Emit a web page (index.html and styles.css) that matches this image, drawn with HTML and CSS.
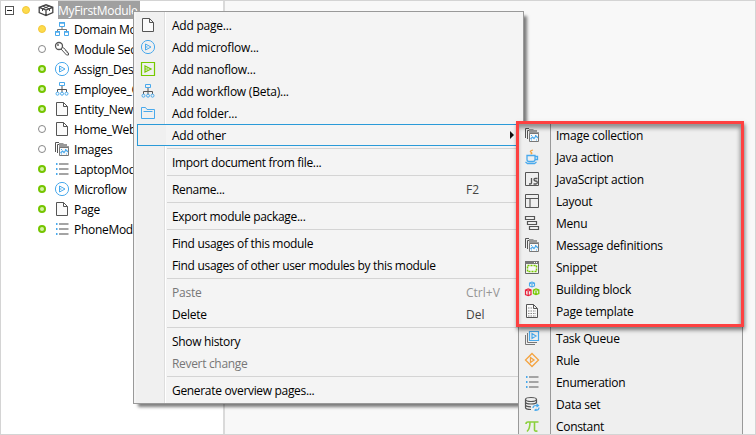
FILE: index.html
```html
<!DOCTYPE html>
<html lang="en"><head><meta charset="utf-8"><title>App Explorer</title><link rel="stylesheet" href="styles.css"></head>
<body>
<svg class="defs" width="0" height="0">
<symbol id="page" viewBox="0 0 16 16"><path d="M2.500 1.500h7l4 4v9h-11zM9.500 1.500v4h4" fill="#fafafa" stroke="#555"/></symbol>
<symbol id="micro" viewBox="0 0 16 16"><circle cx="8" cy="8" r="6.600" fill="none" stroke="#49a9ec"/><path d="M5.500 5v6l5.500-3zM5.500 8h2" fill="none" stroke="#49a9ec"/></symbol>
<symbol id="nano" viewBox="0 0 16 16"><path d="M1.500 1.500h13v13h-13zM5 5v6l6-3zM5 8h3" fill="none" stroke="#76c900" stroke-width="1.200"/></symbol>
<symbol id="flow" viewBox="0 0 16 16"><path d="M8 5v6M3.500 11V8.500h9V11" fill="none" stroke="#555"/><path d="M5.500 1.500h5v3h-5z" fill="none" stroke="#49a9ec"/><g fill="none" stroke="#49a9ec"><circle cx="3.500" cy="12.700" r="1.500"/><circle cx="8" cy="12.700" r="1.500"/><circle cx="12.500" cy="12.700" r="1.500"/></g></symbol>
<symbol id="domain" viewBox="0 0 16 16"><path d="M8 6v3M3.500 11V8.500h9V11" fill="none" stroke="#777"/><path d="M5.500 1.500h5v4h-5zM1.500 10.500h4v4h-4zM10.500 10.500h4v4h-4z" fill="none" stroke="#49a9ec"/><path d="M5 2h6M1 11h5M10 11h5" stroke="#49a9ec" stroke-width="1.500"/></symbol>
<symbol id="folder" viewBox="0 0 16 16"><path d="M1.500 13.500v-11h4l1.500 2h7.500v9zM3.500 6.500h9" fill="none" stroke="#49a9ec"/></symbol>
<symbol id="key" viewBox="0 0 16 16"><circle cx="5" cy="5" r="3.500" fill="none" stroke="#555" stroke-width="1.300"/><circle cx="4" cy="4" r=".9" fill="#555"/><path d="M7 8l5.500 6h2v-2l-1.500-.5v-1.500l-1.500-.3-.3-1.500-3-2.200" fill="none" stroke="#555"/></symbol>
<symbol id="module" viewBox="0 0 16 16"><path d="M1.200 5.300L8 2.800l6.800 2.500v5.200L8 13.500l-6.800-3zM1.200 5.300L8 8l6.800-2.700M8 8v5.500" fill="none" stroke="#444" stroke-width="1.300"/><path d="M4.500 4l6.500 2.700M11.500 4L5 6.700M4.500 7v2M11.500 7v2" stroke="#444"/></symbol>
<symbol id="images" viewBox="0 0 16 16"><path d="M1.500 11V1.500H5M3.500 12V3.500H6" fill="none" stroke="#555"/><path d="M5 4V2h4l1 1h3v2h2v3H5z" fill="#999"/><path d="M5.500 6.500h9v8h-9z" fill="#f8f8f8" stroke="#777"/><path d="M6.500 12l2-2 1.500 1.500L12 9l2 2" fill="none" stroke="#49a9ec" stroke-width="1.200"/><path d="M7 8.500h1M11 8.500h1M7 13h1M12 13h1" stroke="#49a9ec"/></symbol>
<symbol id="list" viewBox="0 0 16 16"><path d="M2 3h1.500M2 8h1.500M2 13h1.500" stroke="#49a9ec" stroke-width="1.800"/><path d="M5 3h9.500M5 8h9.500M5 13h9.500" stroke="#a4a4a4" stroke-width="1.800"/></symbol>
<symbol id="java" viewBox="0 0 16 16"><path d="M9 1Q5 2 7 3.200T6.500 5" fill="none" stroke="#f4a340" stroke-width="1.200"/><path d="M3 6.500h8v4q0 2-2 2H5q-2 0-2-2zM11 7.500h2.500v3H11M1.500 13l2 1.500h7l2-1.500" fill="none" stroke="#49a9ec" stroke-width="1.300"/></symbol>
<symbol id="js" viewBox="0 0 16 16"><path d="M1.500 1.500h13v13h-13z" fill="none" stroke="#555"/><path d="M7.500 7v5q0 1-1.500 1H5M13.500 7.500H11q-1 0-1 1t1 1.500h1q1.300 0 1.300 1.500T12 13H9.500" fill="none" stroke="#555" stroke-width="1.300"/></symbol>
<symbol id="layout" viewBox="0 0 16 16"><path d="M1.500 1.500h13v13h-13zM1.500 5.500h13" fill="none" stroke="#555"/><path d="M6 6v8" stroke="#999" stroke-width="2"/></symbol>
<symbol id="menu" viewBox="0 0 16 16"><path d="M1.500 1.500h9v3h-9zM3.500 6.500h9v3h-9zM5.500 11.500h9v3h-9z" fill="none" stroke="#555" stroke-width="1.200"/></symbol>
<symbol id="snippet" viewBox="0 0 16 16"><path d="M1.500 2.500h13v12h-13z" fill="#f8f8f8" stroke="#666"/><path d="M1 3.500h14" stroke="#777" stroke-width="3"/><path d="M10 3.500h1M12 3.500h1" stroke="#fff"/><path d="M3.500 6.500h9v6h-9z" fill="none" stroke="#76c900" stroke-width="1.500" stroke-dasharray="2 1"/></symbol>
<symbol id="blocks" viewBox="0 0 16 16"><path d="M5.500 2L8 1l2.500 1v3L8 6 5.500 5zM5.500 2L8 3l2.500-1M8 3v3" fill="none" stroke="#49a9ec" stroke-width="1.100"/><path d="M1.500 9l2.700-1L7 9v4.500l-2.800 1.200-2.700-1.200zM1.500 9l2.700 1L7 9M4.200 10v4.700" fill="none" stroke="#e8203a" stroke-width="1.200"/><path d="M9.500 9L12 8l2.800 1v3.500L12 13.600l-2.500-1zM9.500 9l2.500 1 2.800-1M12 10v3.500" fill="none" stroke="#76c900" stroke-width="1.300"/></symbol>
<symbol id="template" viewBox="0 0 16 16"><path d="M2.500 1.500h7l4 4v9h-11zM9.500 1.500v4h4" fill="#fafafa" stroke="#555"/><path d="M4 5h5M4 8h8M4 10.500h8M4 13h8" stroke="#888" stroke-dasharray="1.500 1"/></symbol>
<symbol id="queue" viewBox="0 0 16 16"><path d="M5.500 1.500h9v9h-9zM8 3.500v5L12 6z" fill="none" stroke="#49a9ec" stroke-width="1.200"/><path d="M3.500 3v9.500H13M1.500 5v9.500H11" fill="none" stroke="#777"/></symbol>
<symbol id="rule" viewBox="0 0 16 16"><path d="M8 1.500L14.500 8 8 14.500 1.500 8zM6.500 5.500v5L10 8z" fill="none" stroke="#f4a340" stroke-width="1.300"/></symbol>
<symbol id="data" viewBox="0 0 16 16"><path d="M1.500 3.500v8q0 2 5.500 2M12.500 3.500v4M1.500 6q0 2 5.500 2t5.500-2M1.500 8.800q0 2 5.500 2" fill="none" stroke="#555" stroke-width="1.200"/><ellipse cx="7" cy="3.500" rx="5.500" ry="2" fill="none" stroke="#555" stroke-width="1.200"/><path d="M9 12q0-2.500 3-2.500h2M15 11.500q0 3-4 3M12.500 8l2 1.500-2 1.500M12.500 13l-2 1.500" fill="none" stroke="#49a9ec" stroke-width="1.200"/></symbol>
<symbol id="pi" viewBox="0 0 16 16"><path d="M2 6q0-2 2-2h10.500M6 4q0 7-3 9.500M10.500 4v8q0 1.500 3 1" fill="none" stroke="#8bd03c" stroke-width="1.600"/></symbol>
</svg>
<div class="window">
<ul class="tree">
<li class="root"><span class="toggle"></span><i class="dot yellow"></i><svg><use href="#module"/></svg><span class="label selected">MyFirstModule</span></li>
<li><i class="dot yellow"></i><svg><use href="#domain"/></svg><span class="label">Domain Mo</span></li>
<li><i class="dot empty"></i><svg><use href="#key"/></svg><span class="label">Module Sec</span></li>
<li><i class="dot green"></i><svg><use href="#micro"/></svg><span class="label">Assign_Des</span></li>
<li><i class="dot green"></i><svg><use href="#flow"/></svg><span class="label">Employee_O</span></li>
<li><i class="dot green"></i><svg><use href="#page"/></svg><span class="label">Entity_New</span></li>
<li><i class="dot empty"></i><svg><use href="#page"/></svg><span class="label">Home_Web</span></li>
<li><i class="dot empty"></i><svg><use href="#images"/></svg><span class="label">Images</span></li>
<li><i class="dot green"></i><svg><use href="#list"/></svg><span class="label">LaptopMod</span></li>
<li><i class="dot green"></i><svg><use href="#micro"/></svg><span class="label">Microflow</span></li>
<li><i class="dot green"></i><svg><use href="#page"/></svg><span class="label">Page</span></li>
<li><i class="dot green"></i><svg><use href="#list"/></svg><span class="label">PhoneMod</span></li>
</ul>
<main class="editor"></main>
</div>
<ul class="menu context">
<li><svg><use href="#page"/></svg><span>Add page...</span></li>
<li><svg><use href="#micro"/></svg><span>Add microflow...</span></li>
<li><svg><use href="#nano"/></svg><span>Add nanoflow...</span></li>
<li><svg><use href="#flow"/></svg><span>Add workflow (Beta)...</span></li>
<li><svg><use href="#folder"/></svg><span>Add folder...</span></li>
<li class="active"><span>Add other</span><b class="arrow"></b></li>
<li class="sep"></li>
<li class="tight"><span>Import document from file...</span></li>
<li class="sep"></li>
<li class="tight"><span>Rename...</span><kbd>F2</kbd></li>
<li class="sep"></li>
<li class="tight"><span>Export module package...</span></li>
<li class="sep"></li>
<li class="tight"><span>Find usages of this module</span></li>
<li class="tight"><span>Find usages of other user modules by this module</span></li>
<li class="sep"></li>
<li class="disabled"><span>Paste</span><kbd>Ctrl+V</kbd></li>
<li><span>Delete</span><kbd>Del</kbd></li>
<li class="sep"></li>
<li class="tight"><span>Show history</span></li>
<li class="tight disabled"><span>Revert change</span></li>
<li class="sep"></li>
<li class="tight"><span>Generate overview pages...</span></li>
</ul>
<ul class="menu submenu">
<li><svg><use href="#images"/></svg><span>Image collection</span></li>
<li><svg><use href="#java"/></svg><span>Java action</span></li>
<li><svg><use href="#js"/></svg><span>JavaScript action</span></li>
<li><svg><use href="#layout"/></svg><span>Layout</span></li>
<li><svg><use href="#menu"/></svg><span>Menu</span></li>
<li><svg><use href="#images"/></svg><span>Message definitions</span></li>
<li><svg><use href="#snippet"/></svg><span>Snippet</span></li>
<li><svg><use href="#blocks"/></svg><span>Building block</span></li>
<li><svg><use href="#template"/></svg><span>Page template</span></li>
<li class="sep"></li>
<li><svg><use href="#queue"/></svg><span>Task Queue</span></li>
<li><svg><use href="#rule"/></svg><span>Rule</span></li>
<li class="tight"><svg><use href="#list"/></svg><span>Enumeration</span></li>
<li><svg><use href="#data"/></svg><span>Data set</span></li>
<li class="tight"><svg><use href="#pi"/></svg><span>Constant</span></li>
</ul>
<div class="highlight"></div>
</body></html>
```
FILE: styles.css
```css
* { box-sizing: border-box; }
body { margin: 0; width: 756px; height: 435px; overflow: hidden; position: relative; font: 12px/16px "Open Sans", "Noto Sans", sans-serif; letter-spacing: -0.23px; color: #000; }
ul { list-style: none; margin: 0; padding: 0; }
.defs { position: absolute; }
svg { width: 16px; height: 16px; flex: none; }
.window { width: 756px; height: 435px; border: 1px solid #d4d4d4; display: flex; background: #fff; }
.tree { width: 224px; flex: none; border-right: 2px solid #dadada; overflow: hidden; letter-spacing: -0.3px; }
.tree li { height: 20px; padding-left: 37px; display: flex; align-items: center; white-space: nowrap; }
.tree li.root { padding-left: 4px; height: 18px; }
.toggle { width: 9px; height: 9px; border: 1px solid #555; margin-right: 8px; display: grid; place-items: center; }
.toggle::before { content: ""; width: 5px; height: 1px; background: #222; }
.dot { width: 8px; height: 8px; border-radius: 50%; flex: none; margin-right: 8px; }
.yellow { background: #fddb4c; border: 1px solid #f3c83a; }
.green { background: #d5f0a9; border: 2.500px solid #75c500; }
.empty { border: 1px solid #888; }
.label { margin-left: 4px; padding-top: 2px; }
.selected { background: #a0a0a0; color: #fff; padding-right: 2px; }
.editor { flex: 1; background: #f8f8f8; }
.menu { position: absolute; white-space: nowrap; }
.menu li { height: 22px; display: flex; align-items: center; position: relative; }
.menu span { padding-top: 2px; }
.menu .tight { letter-spacing: -0.32px; }
.context { left: 133px; top: 11px; width: 391px; height: 393px; border: 1px solid #999; padding: 2px; background: linear-gradient(90deg, #f4f4f4 2px, #f0f0f0 2px 30px, #dedede 30px 31px, #fff 31px 32px, #f4f4f4 32px); box-shadow: 4px 4px 3px -1px rgba(0,0,0,.5); }
.context li { padding-left: 36px; }
.context svg { margin: 0 16px 0 -32px; }
.context li.active { border: 1px solid #2a9ad8; padding-left: 34px; margin: 0 1px; background: linear-gradient(90deg, #f0f0f0 28px, #f4f4f4 28px); }
.context li.sep { height: 5px; padding: 2px 0; margin-left: 31px; }
.context li.sep::before { content: ""; height: 1px; width: 100%; background: #d4d4d4; }
.arrow { margin-left: auto; margin-right: 5px; border: 4px solid transparent; border-left-color: #111; border-right: 0; }
kbd { position: absolute; left: 330px; top: 4px; font: inherit; letter-spacing: 0; color: #444; }
.disabled { color: #777; }
.disabled kbd { color: #959595; }
.submenu { left: 518px; top: 122px; width: 225px; height: 312px; padding-top: 2px; overflow: hidden; border-left: 1px solid #999; border-right: 1px solid #999; background: linear-gradient(90deg, #efefef 31px, #999 31px 32px, #efefef 32px); }
.submenu li { padding-left: 5px; }
.submenu svg { margin-right: 16px; }
.submenu li.sep { height: 5px; }
.highlight { position: absolute; left: 516px; top: 121px; width: 228px; height: 206px; border: 3px solid #fd4141; box-shadow: 1px 3px 4px rgba(0,0,0,.5), inset -1px 4px 4px rgba(0,0,0,.4); }
```
